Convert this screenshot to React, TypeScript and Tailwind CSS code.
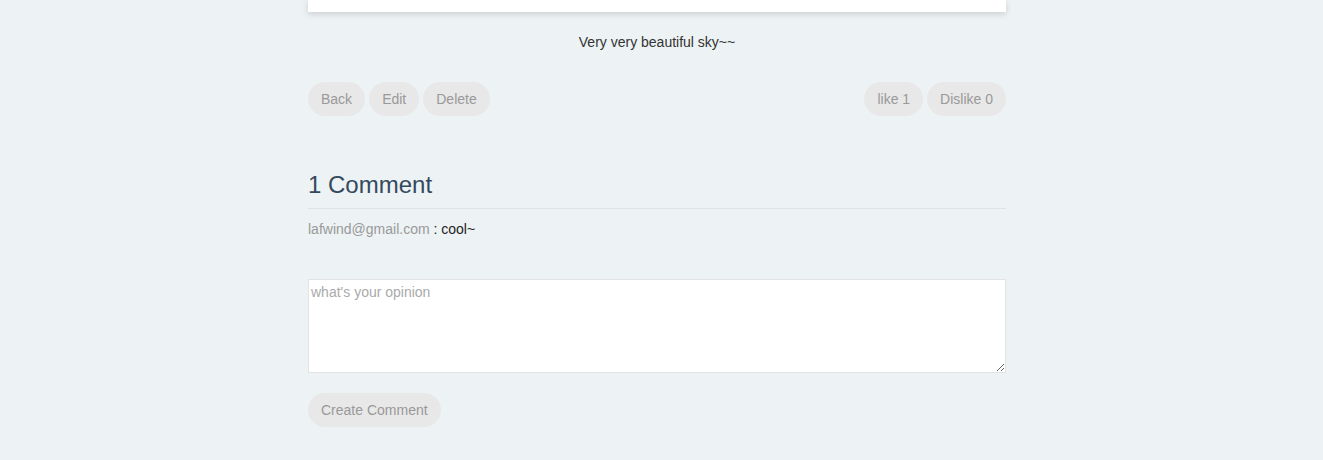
import React from "react";

const btn =
  "h-[34px] px-[13px] rounded-full bg-[#e8e8e8] text-[#999] text-[14px] leading-[34px]";

export default function App() {
  return (
    <div
      className="min-h-[460px] bg-[#edf2f4] text-[#34495e]"
      style={{ fontFamily: '"Liberation Sans", Arial, sans-serif' }}
    >
      <div className="ml-[308px] w-[698px]">
        <div className="h-[12px] bg-white shadow-[0_2px_6px_rgba(0,0,0,0.15)]" />
        <p className="mt-[20px] text-center text-[14px] leading-[20px] text-[#333]">
          Very very beautiful sky~~
        </p>
        <div className="mt-[30px] flex justify-between">
          <div className="flex gap-[4px]">
            <button className={btn}>Back</button>
            <button className={btn}>Edit</button>
            <button className={btn}>Delete</button>
          </div>
          <div className="flex gap-[4px]">
            <button className={btn}>like 1</button>
            <button className={btn}>Dislike 0</button>
          </div>
        </div>
        <h2 className="mt-[54px] text-[24px] leading-[30px] text-[#34495e] pb-[8px] border-b border-[#dde2e4]">
          1 Comment
        </h2>
        <div className="mt-[10px] text-[14px] leading-[20px]">
          <span className="text-[#999]">lafwind@gmail.com</span>
          <span className="text-[#222]"> : cool~</span>
        </div>
        <textarea
          placeholder="what's your opinion"
          className="mt-[40px] block w-full h-[94px] bg-white border border-[#e3e3e3] px-[2px] py-[2px] text-[14px] leading-[20px] placeholder:text-[#aaa] outline-none"
        />
        <button className={btn + " mt-[20px]"}>Create Comment</button>
      </div>
    </div>
  );
}
